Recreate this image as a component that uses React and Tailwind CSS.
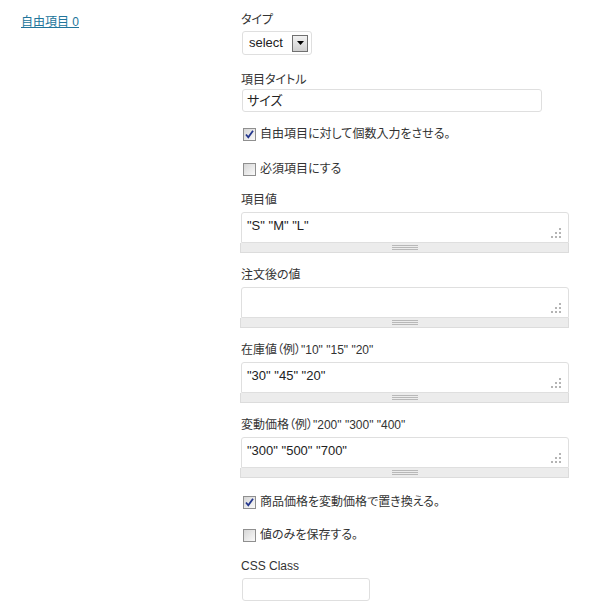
import React from 'react';

const font = "font-['Liberation_Sans','Noto_Sans_CJK_JP',sans-serif] [font-feature-settings:'palt']";

function Label({ children }) {
  return <div className="h-[18px] leading-[18px] text-[12px] text-[#333]">{children}</div>;
}

function Checkbox({ checked, label, className }) {
  return (
    <div className={`flex items-center h-[18px] ${className}`}>
      <div className="ml-[2px] w-[13px] h-[13px] border border-[#8f8f8f] bg-gradient-to-br from-[#d6d6d6] to-[#fafafa] flex items-center justify-center">
        {checked && (
          <svg width="11" height="11" viewBox="0 0 11 11">
            <path d="M2 5.5 L4.3 8.3 L9 1.8" fill="none" stroke="#23368d" strokeWidth="1.8" />
          </svg>
        )}
      </div>
      <span className="ml-[4px] text-[12px] text-[#333] leading-[18px]">{label}</span>
    </div>
  );
}

function Area({ label, value, className }) {
  return (
    <div className={className}>
      <Label>{label}</Label>
      <div className="mt-[3px] w-[328px]">
        <div className="relative h-[31px] border border-[#dfdfdf] rounded-t-[3px] bg-white pl-[5px] pt-[5px] text-[13px] leading-[16px] text-[#222]">
          {value}
          <svg className="absolute right-[6px] bottom-[4px]" width="11" height="11" viewBox="0 0 11 11">
            <rect x="8" y="1" width="2" height="2" fill="#b4b4b4" />
            <rect x="4" y="5" width="2" height="2" fill="#b4b4b4" />
            <rect x="8" y="5" width="2" height="2" fill="#b4b4b4" />
            <rect x="0" y="9" width="2" height="2" fill="#b4b4b4" />
            <rect x="4" y="9" width="2" height="2" fill="#b4b4b4" />
            <rect x="8" y="9" width="2" height="2" fill="#b4b4b4" />
          </svg>
        </div>
        <div className="-ml-[1px] h-[10px] bg-[#ececec] border border-t-0 border-[#dcdcdc] flex flex-col items-center justify-center gap-[1px]">
          <div className="w-[26px] h-[1px] bg-[#b8b8b8]" />
          <div className="w-[26px] h-[1px] bg-[#b8b8b8]" />
          <div className="w-[26px] h-[1px] bg-[#b8b8b8]" />
        </div>
      </div>
    </div>
  );
}

export default function App() {
  return (
    <div className={`w-[600px] h-[612px] bg-white flex ${font}`}>
      <div className="w-[241px] pl-[21px] pt-[9px]">
        <a href="#" className="text-[12px] leading-[16px] text-[#21759b] underline">自由項目 0</a>
      </div>

      <div className="flex flex-col pt-[11px]">
        <Label>タイプ</Label>
        <div className="mt-[2px] ml-[1px] w-[70px] h-[24px] border border-[#dfdfdf] rounded-[3px] bg-white flex items-center justify-between pl-[6px] pr-[3px]">
          <span className="text-[13px] text-[#222]">select</span>
          <div className="w-[16px] h-[17px] border border-[#707070] bg-gradient-to-b from-[#f2f2f2] to-[#cfcfcf] flex items-center justify-center">
            <svg width="7" height="4" viewBox="0 0 7 4">
              <path d="M0 0 H7 L3.5 4 Z" fill="#000" />
            </svg>
          </div>
        </div>

        <div className="mt-[16px]">
          <Label>項目タイトル</Label>
          <div className="ml-[1px] w-[300px] h-[23px] border border-[#dfdfdf] rounded-[3px] bg-white pl-[4px] text-[13px] leading-[21px] text-[#222]">
            サイズ
          </div>
        </div>

        <Checkbox className="mt-[13px]" checked label="自由項目に対して個数入力をさせる。" />
        <Checkbox className="mt-[17px]" label="必須項目にする" />

        <Area className="mt-[13px]" label="項目値" value={'"S" "M" "L"'} />
        <Area className="mt-[13px]" label="注文後の値" value="" />
        <Area className="mt-[13px]" label={'在庫値（例）"10" "15" "20"'} value={'"30" "45" "20"'} />
        <Area className="mt-[13px]" label={'変動価格（例）"200" "300" "400"'} value={'"300" "500" "700"'} />

        <Checkbox className="mt-[15px]" checked label="商品価格を変動価格で置き換える。" />
        <Checkbox className="mt-[15px]" label="値のみを保存する。" />

        <div className="mt-[13px]">
          <Label>CSS Class</Label>
          <div className="mt-[3px] ml-[1px] w-[128px] h-[23px] border border-[#dfdfdf] rounded-[3px] bg-white" />
        </div>
      </div>
    </div>
  );
}
